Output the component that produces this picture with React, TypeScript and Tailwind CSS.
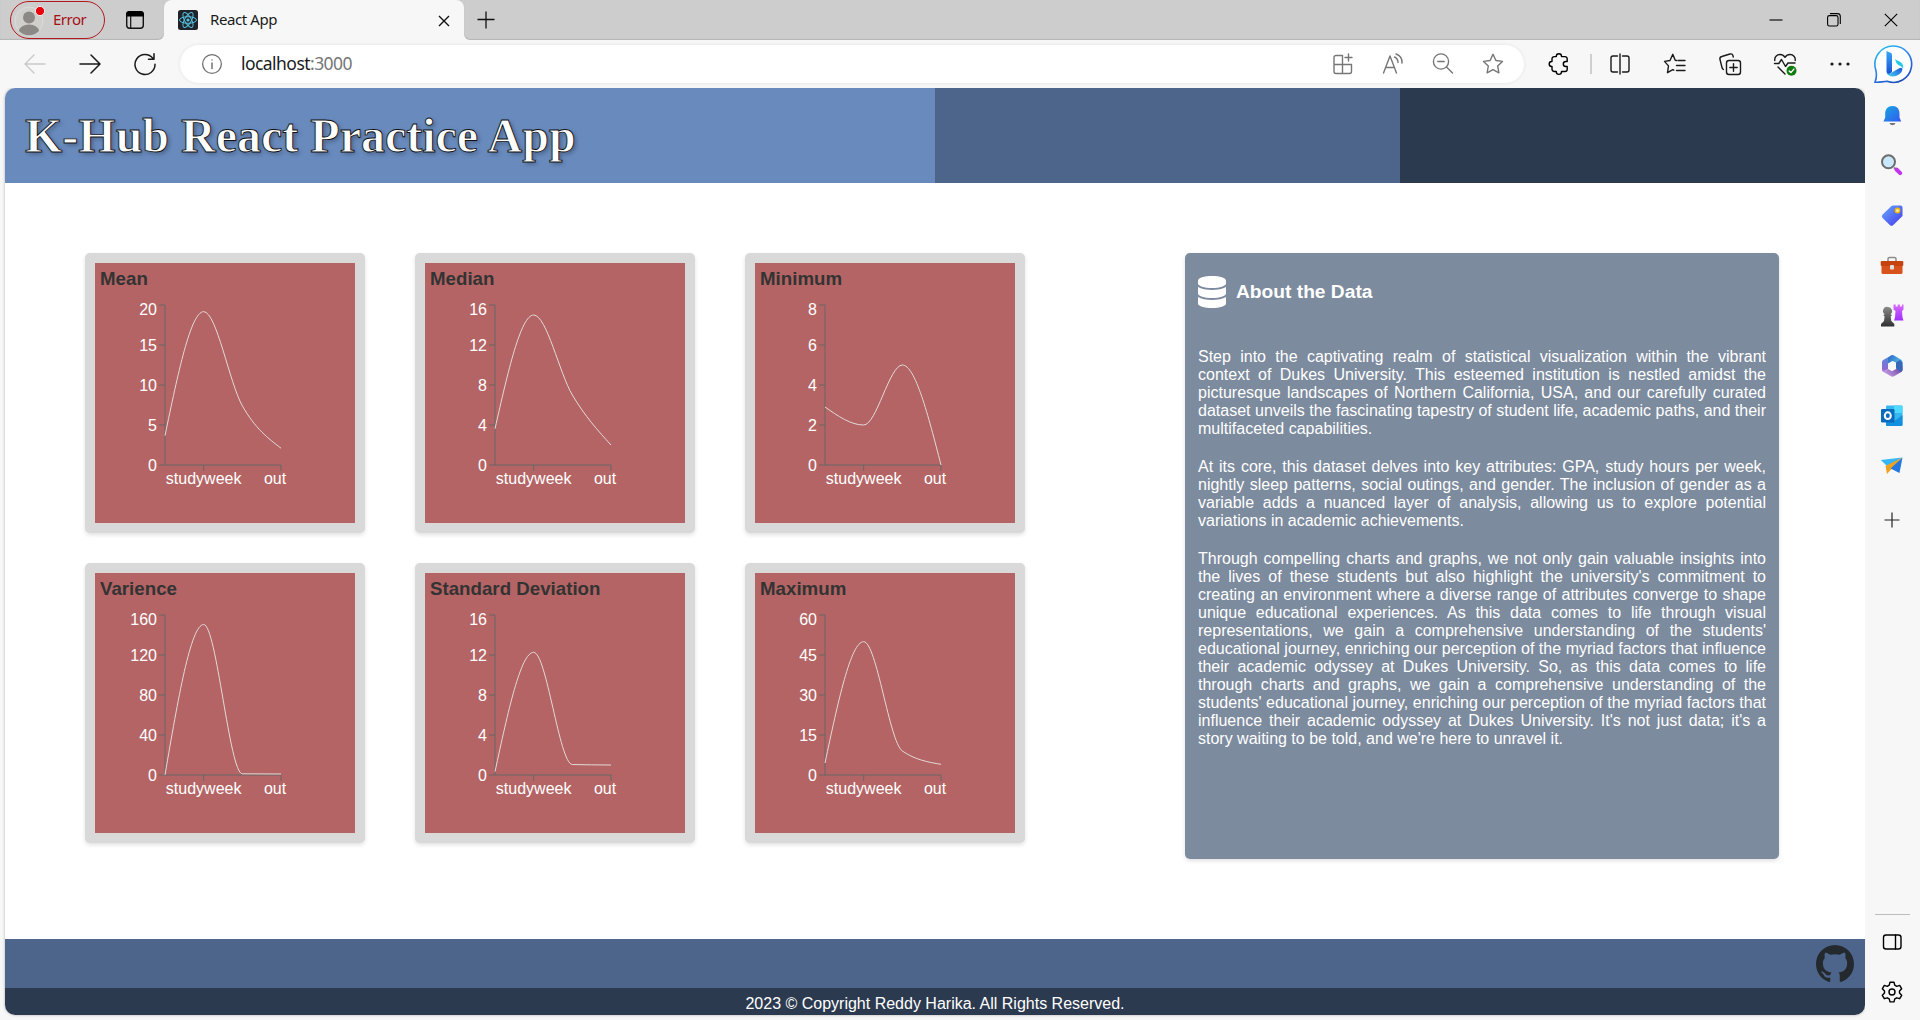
import React from "react";
import { FaDatabase } from "react-icons/fa";
import { BsGithub } from "react-icons/bs";

type Series = { title: string; ticks: number[]; values: number[] };

const SERIES: Series[] = [
  { title: "Mean", ticks: [0, 5, 10, 15, 20], values: [3.66, 19.17, 7.4, 2.1] },
  { title: "Median", ticks: [0, 4, 8, 12, 16], values: [3.62, 15, 7, 2] },
  { title: "Minimum", ticks: [0, 2, 4, 6, 8], values: [2.9, 2, 5, 0] },
  { title: "Varience", ticks: [0, 40, 80, 120, 160], values: [0.1, 150.5, 1.2, 1] },
  { title: "Standard Deviation", ticks: [0, 4, 8, 12, 16], values: [0.33, 12.27, 1.05, 1] },
  { title: "Maximum", ticks: [0, 15, 30, 45, 60], values: [4.5, 50, 9, 4] },
];

const LEFT = 65;
const TOP = 5;
const PLOT_H = 160;
const STEP = 116 / 3;

/** Monotone cubic interpolation through equally spaced points. */
function monotonePath(pts: [number, number][]): string {
  const n = pts.length;
  const slope: number[] = [];
  for (let i = 0; i < n - 1; i++) slope.push((pts[i + 1][1] - pts[i][1]) / (pts[i + 1][0] - pts[i][0]));
  const t: number[] = new Array(n).fill(0);
  for (let i = 1; i < n - 1; i++) {
    const a = slope[i - 1];
    const b = slope[i];
    t[i] = (Math.sign(a) + Math.sign(b)) * Math.min(Math.abs(a), Math.abs(b), Math.abs(a + b) / 4);
  }
  t[0] = (3 * slope[0] - t[1]) / 2;
  t[n - 1] = (3 * slope[n - 2] - t[n - 2]) / 2;
  let d = `M${pts[0][0]},${pts[0][1]}`;
  for (let i = 0; i < n - 1; i++) {
    const dx = (pts[i + 1][0] - pts[i][0]) / 3;
    d += `C${pts[i][0] + dx},${pts[i][1] + dx * t[i]},${pts[i + 1][0] - dx},${pts[i + 1][1] - dx * t[i + 1]},${pts[i + 1][0]},${pts[i + 1][1]}`;
  }
  return d;
}

function ChartCard({ title, ticks, values }: Series) {
  const max = ticks[ticks.length - 1];
  const y = (v: number) => TOP + PLOT_H * (1 - v / max);
  const pts = values.map((v, i) => [LEFT + i * STEP, y(v)] as [number, number]);
  const right = LEFT + 3 * STEP;
  return (
    <div className="h-[280px] w-[280px] rounded-[5px] border-10 border-[#d9d9d9] bg-[#d9d9d9] shadow-[0_2px_4px_rgba(0,0,0,0.12)]">
      <div className="h-[260px] bg-[#b46464] pt-[5px] pl-[5px]">
        <h3 className="h-[22px] text-[18.72px] leading-[22px] font-bold text-[#333]">{title}</h3>
        <svg className="mt-[10px] block" width="200" height="200" fontSize="16">
          <g stroke="#666" fill="none">
            <path d={`M${LEFT},${TOP}V${TOP + PLOT_H}H${right}`} />
            {ticks.map((v) => (
              <path key={v} d={`M${LEFT - 6},${y(v)}H${LEFT}`} />
            ))}
            <path d={`M${LEFT + STEP},165v6M${right},165v6`} />
          </g>
          <g fill="#fff">
            {ticks.map((v) => (
              <text key={v} x={LEFT - 8} y={Math.max(y(v), 9) + 5.7} textAnchor="end">
                {v}
              </text>
            ))}
            <text x={LEFT + STEP} y="184" textAnchor="middle">studyweek</text>
            <text x="175" y="184" textAnchor="middle">out</text>
          </g>
          <path d={monotonePath(pts)} fill="none" stroke="#e2dada" />
        </svg>
      </div>
    </div>
  );
}

type IconProps = { children: React.ReactNode; size?: number; className?: string };

function Icon({ children, size = 24, className = "text-[#1a1a1a]" }: IconProps) {
  return (
    <svg
      width={size}
      height={size}
      viewBox="0 0 24 24"
      fill="none"
      stroke="currentColor"
      strokeWidth="1.4"
      strokeLinecap="round"
      strokeLinejoin="round"
      className={"shrink-0 " + className}
    >
      {children}
    </svg>
  );
}

const STAR = "M12 2.3l2.9 6.2 6.6.9-4.8 4.7 1.2 6.7-5.9-3.2-5.9 3.2 1.2-6.7-4.8-4.7 6.6-.9z";

function TabStrip() {
  return (
    <div className="flex h-10 bg-[#f7f7f7]">
      <div className="flex w-[164px] items-start rounded-br-[6px] bg-[#cdcdcd] shadow-[inset_0_-1px_1px_rgba(0,0,0,0.12)]">
        <div className="mt-[1px] ml-[10px] flex h-[38px] w-[95px] items-center rounded-full border-[1.5px] border-[#b3181e] text-[#a80f14]">
          <svg width="34" height="34" viewBox="0 0 34 34" className="ml-[3px]">
            <circle cx="15" cy="18" r="14" fill="#d0cfcc" stroke="#dddcd9" />
            <circle cx="15" cy="14.5" r="6" fill="#8b8885" />
            <path d="M5 28a10 6.5 0 0 1 20 0a14 14 0 0 1-20 0z" fill="#8b8885" />
            <circle cx="26" cy="8" r="4.6" fill="#e8000b" stroke="#eee" />
          </svg>
          <span className="-mt-[2px] ml-[5px] text-[15px] tracking-[-0.5px]">Error</span>
        </div>
        <svg width="24" height="24" viewBox="0 0 24 24" className="mt-2 ml-[18px]">
          <rect x="3.7" y="3.7" width="16.6" height="16.6" rx="3" fill="none" stroke="#111" strokeWidth="1.4" />
          <path d="M3 8.500V6.500a3.500 3.500 0 0 1 3.500-3.500h11a3.500 3.500 0 0 1 3.500 3.500v2z" fill="#000" />
          <path d="M7.700 8v12" stroke="#111" strokeWidth="1.200" />
        </svg>
      </div>
      <div className="flex w-[300px] items-center bg-[#cdcdcd]">
        <div className="flex h-10 w-[300px] items-center rounded-t-[8px] bg-[#f7f7f7]">
          <svg width="20" height="20" viewBox="0 0 20 20" className="ml-[14px]">
            <rect width="20" height="20" rx="2.5" fill="#20232a" />
            <g fill="none" stroke="#53c1de" strokeWidth="1">
              <ellipse cx="10" cy="10" rx="8.500" ry="3.300" />
              <ellipse cx="10" cy="10" rx="8.500" ry="3.300" transform="rotate(60 10 10)" />
              <ellipse cx="10" cy="10" rx="8.500" ry="3.300" transform="rotate(120 10 10)" />
            </g>
            <circle cx="10" cy="10" r="1.6" fill="#53c1de" />
          </svg>
          <span className="-mt-[2px] ml-3 text-[15px] tracking-[-0.4px] text-[#1b1b1b]">React App</span>
          <svg width="12" height="12" viewBox="0 0 12 12" className="mt-px mr-[14px] ml-auto">
            <path d="M1 1l10 10M11 1L1 11" stroke="#111" strokeWidth="1.400" />
          </svg>
        </div>
      </div>
      <div className="flex flex-1 items-start rounded-bl-[6px] bg-[#cdcdcd] shadow-[inset_0_-1px_1px_rgba(0,0,0,0.12)]">
        <svg width="18" height="18" viewBox="0 0 18 18" className="mt-[11px] ml-[13px]">
          <path d="M9 0.500v17M0.500 8.500h17" stroke="#111" strokeWidth="1.300" />
        </svg>
        <div className="mt-[12.500px] mr-[22px] ml-auto flex gap-[43.500px]">
          <svg width="14" height="14" viewBox="0 0 14 14"><path d="M0.500 7h13" stroke="#000" strokeWidth="1.100" /></svg>
          <svg width="14" height="14" viewBox="0 0 14 14" fill="none" stroke="#000" strokeWidth="1.100">
            <rect x="0.600" y="2.600" width="10.400" height="10.400" rx="1.800" />
            <path d="M3 0.600h7.500a2.800 2.800 0 0 1 2.800 2.800V11" />
          </svg>
          <svg width="14" height="14" viewBox="0 0 14 14"><path d="M0.800 0.800l12.400 12.400M13.200 0.800L0.800 13.200" stroke="#000" strokeWidth="1.100" /></svg>
        </div>
      </div>
    </div>
  );
}

function BingLogo() {
  return (
    <svg width="42" height="44" viewBox="0 0 42 44" className="shrink-0">
      <defs>
        <linearGradient id="bingRing" x1="0" y1="0" x2="0.6" y2="1">
          <stop offset="0" stopColor="#1fc8f2" />
          <stop offset="0.5" stopColor="#2f86ee" />
          <stop offset="1" stopColor="#1f4fc4" />
        </linearGradient>
        <linearGradient id="bingStem" x1="0" y1="0" x2="0" y2="1">
          <stop offset="0" stopColor="#36a8f8" />
          <stop offset="1" stopColor="#1b4fd0" />
        </linearGradient>
        <linearGradient id="bingSweep" x1="1" y1="0" x2="0" y2="0.6">
          <stop offset="0" stopColor="#1d55d8" />
          <stop offset="1" stopColor="#3fc4f2" />
        </linearGradient>
      </defs>
      <path
        d="M20.500 2a18.200 18.200 0 1 1-6.300 35.300C9.800 37.300 6 38.800 2 38.200C3.600 34.500 3.700 29.500 2.700 25.500A18.200 18.200 0 0 1 20.500 2z"
        fill="#fff"
        stroke="url(#bingRing)"
        strokeWidth="1.600"
      />
      <path d="M13.500 7l4.200 1.700q1.300.6 1.300 2V28l-3.200 2.500q-2.300-.5-2.300-3z" fill="url(#bingStem)" />
      <path d="M13.600 27.500q1 3.200 4 1.700l8.500-5q3.500-1.500 3.300 1.300-.8 4.300-6.400 6.500-8 2-9.400-4.500z" fill="url(#bingSweep)" />
      <path d="M22 15.300l5 2.400q3.800 2.300 3.200 6.800-1.700-2.200-4.700-3.500-1.500-.7-2.200-2.200z" fill="#22cbe8" />
    </svg>
  );
}

function Toolbar() {
  return (
    <div className="flex h-12 items-center bg-[#f7f7f7]">
      <div className="ml-[23px] flex gap-[31px]">
        <Icon className="text-[#c9c9c9]"><path d="M22 12H2.500M11 3L2 12l9 9" /></Icon>
        <Icon><path d="M2 12h19.500M13 3l9 9-9 9" strokeWidth="1.500" /></Icon>
        <Icon><path d="M20 6.500A10 10 0 1 0 22 12.300M21 1.800v5.500h-5.500" strokeWidth="1.500" /></Icon>
      </div>
      <div className="ml-[23px] flex h-[38px] w-[1344px] items-center rounded-full bg-white shadow-[0_0_4px_rgba(0,0,0,0.08)]">
        <Icon size={22} className="ml-[21px] text-[#6f6f6f]">
          <circle cx="12" cy="12" r="10.200" />
          <path d="M12 11v6M12 7.500v.2" strokeWidth="1.600" />
        </Icon>
        <span className="-mt-[2px] ml-[18px] text-[17.500px] tracking-[-0.55px] text-[#1b1b1b]">
          localhost<span className="text-[#767676]">:3000</span>
        </span>
        <div className="mr-[19px] ml-auto flex gap-[26px] text-[#767676]">
          <Icon className="">
            <path d="M11.500 3.500H5a2 2 0 0 0-2 2v14a2 2 0 0 0 2 2h13.500a2 2 0 0 0 2-2V12.500H3M11.500 3.500v18M17.500 2v7M14 5.500h7" />
          </Icon>
          <Icon className="">
            <path d="M2.500 21L9 4l6.500 17M4.700 15.500h8.600M13.500 5a6 6 0 0 1 3.500 5.500M15 2a9 9 0 0 1 6 9" />
          </Icon>
          <Icon className="">
            <circle cx="10" cy="9.500" r="7.600" />
            <path d="M15.500 15l6 6M6.800 9.500h6.400" />
          </Icon>
          <Icon className=""><path d={STAR} /></Icon>
        </div>
      </div>
      <Icon className="ml-[23px]">
        <path d="M9.300 4.600V4.300a2.600 2.600 0 0 1 5.200 0v.3H18a2.200 2.200 0 0 1 2.200 2.200V9.500h-1.400a2.500 2.500 0 0 0 0 5h1.400v2.800a2.200 2.200 0 0 1-2.200 2.200h-3.500v.3a2.600 2.600 0 0 1-5.200 0v-.3H7.200A2.200 2.200 0 0 1 5 17.300V14.500h-.3a2.500 2.500 0 0 1 0-5H5V6.800a2.200 2.200 0 0 1 2.200-2.200z" />
      </Icon>
      <div className="ml-[19px] h-5 w-[1.500px] bg-[#cfcfcf]" />
      <div className="ml-[16px] flex gap-[31px]">
        <Icon>
          <path d="M9.500 4H5a2 2 0 0 0-2 2v12a2 2 0 0 0 2 2h4.500M14.500 4H19a2 2 0 0 1 2 2v12a2 2 0 0 1-2 2h-4.500M12 2v20" />
        </Icon>
        <Icon>
          <path d="M13.500 8.500l-1.300-.3L9.800 2.300 7 8.500l-5.500.9 4 4.500-1 6.800 5.300-3 1 .5M15 8.500h7M13.500 13.500H22M13.500 18.500H22" />
        </Icon>
        <Icon>
          <rect x="8.500" y="8.500" width="14" height="14" rx="2.500" />
          <path d="M15.500 11.800v7.400M11.800 15.500h7.400M5.500 17.500a3 3 0 0 1-1.500-2L2 7.500A2.500 2.500 0 0 1 3.800 4.500L12 2a2.500 2.500 0 0 1 3 1.800l.3 1.200" />
        </Icon>
        <Icon>
          <path d="M1.800 8.500C1.300 5 3.800 2.500 7 2.500c2.500 0 4 1.300 5 2.800 1-1.500 2.500-2.800 5-2.800 3.200 0 5.700 2.500 5.200 6M1.500 11.500h4.300l2.700-4 4 7 2.500-3.500h7M5 15l7 7" />
          <circle cx="18.500" cy="18.800" r="5" fill="#107c10" stroke="none" />
          <path d="M16.200 19l1.700 1.600 3-3.500" stroke="#fff" />
        </Icon>
        <Icon>
          <g fill="currentColor" stroke="none">
            <circle cx="4" cy="12" r="1.600" />
            <circle cx="12" cy="12" r="1.600" />
            <circle cx="20" cy="12" r="1.600" />
          </g>
        </Icon>
      </div>
    </div>
  );
}

function Sidebar() {
  return (
    <aside className="flex w-[55px] flex-col items-center bg-[#f7f7f7] pr-px">
      <svg width="0" height="0" className="absolute">
        <defs>
          <linearGradient id="blue" x1="0" y1="0" x2="1" y2="1">
            <stop offset="0" stopColor="#14a8e0" />
            <stop offset="1" stopColor="#3558f0" />
          </linearGradient>
          <linearGradient id="tag" x1="0" y1="0" x2="1" y2="1">
            <stop offset="0" stopColor="#6aa9ff" />
            <stop offset="1" stopColor="#4238ea" />
          </linearGradient>
          <linearGradient id="violet" x1="0" y1="0" x2="0" y2="1">
            <stop offset="0" stopColor="#d96bff" />
            <stop offset="1" stopColor="#a02fff" />
          </linearGradient>
          <linearGradient id="pawn" x1="0" y1="0" x2="0" y2="1">
            <stop offset="0" stopColor="#8a8a8a" />
            <stop offset="1" stopColor="#303030" />
          </linearGradient>
          <linearGradient id="hexLeft" x1="0" y1="0" x2="0" y2="1">
            <stop offset="0" stopColor="#4d8fe0" />
            <stop offset="1" stopColor="#9a62d0" />
          </linearGradient>
          <linearGradient id="hexTop" x1="0" y1="0" x2="1" y2="0.6">
            <stop offset="0" stopColor="#2c62c0" />
            <stop offset="1" stopColor="#58c4ee" />
          </linearGradient>
          <linearGradient id="hexBottom" x1="0" y1="0.5" x2="1" y2="0">
            <stop offset="0" stopColor="#c79ae6" />
            <stop offset="1" stopColor="#5b3c94" />
          </linearGradient>
        </defs>
      </svg>
      <div className="mt-[16px] flex flex-col gap-[26px]">
        <svg width="24" height="24" viewBox="0 0 24 24">
          <path d="M12.500 2c4.500 0 7 3 7 7.500v4l1.700 4H3.500l1.700-4v-4C5.200 5 8 2 12.500 2z" fill="url(#blue)" />
          <path d="M9.500 19h6q-.8 2.300-3 2.300t-3-2.300z" fill="#777" />
        </svg>
        <svg width="24" height="24" viewBox="0 0 24 24">
          <path d="M14 13.500l2 2" stroke="#888" strokeWidth="2" />
          <path d="M16.500 15.500l3.700 3.700" stroke="#c235ee" strokeWidth="4" strokeLinecap="round" />
          <circle cx="8.500" cy="7.800" r="6.500" fill="#c9e8fb" stroke="#6d6d6d" strokeWidth="2" />
        </svg>
        <svg width="24" height="24" viewBox="0 0 24 24">
          <path d="M13 1.500h7.500a2 2 0 0 1 2 2V12L13.300 21a2.500 2.500 0 0 1-3.500 0L2.600 14a2.500 2.500 0 0 1 0-3.500l8.600-8.200a3 3 0 0 1 1.800-.8z" fill="url(#tag)" />
          <circle cx="17.500" cy="6.500" r="2.200" fill="#ffe9a0" stroke="#f0b800" strokeWidth="1.400" />
        </svg>
        <svg width="24" height="24" viewBox="0 0 24 24">
          <path d="M8 8V5a1.500 1.500 0 0 1 1.500-1.500h5A1.500 1.500 0 0 1 16 5V8" fill="none" stroke="#8d8d8d" strokeWidth="1.500" />
          <rect x="1.500" y="9.500" width="21" height="10.500" rx="1.500" fill="#d8521b" />
          <rect x="0.700" y="7" width="22.600" height="5" rx="1" fill="#c4430f" />
          <rect x="10" y="11" width="4" height="4.500" rx="0.800" fill="#e0dede" />
        </svg>
        <svg width="24" height="24" viewBox="0 0 24 24">
          <path d="M13.500 .5h2.200v2h2v-2h2.200v2h2v-2h1.600v5l-1.500 1.500.5 6.500 1 3H14l1-3 .5-6.500L13.500 5.500z" fill="url(#violet)" />
          <path d="M8 3a4 4 0 0 1 2.500 7.200l1.500.8-1.300 1.500.6 4.500 3 3v2.500H1V20l3-3 .6-4.500L3.200 11l1.600-.8A4 4 0 0 1 8 3z" fill="url(#pawn)" />
        </svg>
        <svg width="24" height="24" viewBox="0 0 24 24">
          <path d="M12 1L3.200 6Q2 6.800 2 8.300v7.400q0 1.300 1.200 2L8 15V9l5-3z" fill="url(#hexLeft)" />
          <path d="M11 1.400q1.500-.8 3 0L21.300 5.700q1.200.8 1.200 2.300v4.500L16 8.500 12.500 7 8 9.500V4z" fill="url(#hexTop)" />
          <path d="M2 15.500q0 1.400 1.200 2.200l7.800 4.500q1.500.9 3 0l7.300-4.200q1.200-.8 1.200-2.300V12L16 15l-4 2.300L8 15l-3 2z" fill="url(#hexBottom)" />
          <path d="M22.500 8.500v7.200q0 1.200-1 2L16 14.500V8.500L20 6z" fill="#3767b8" />
          <circle cx="12.200" cy="12" r="3.700" fill="#f7f7f7" />
        </svg>
        <svg width="24" height="24" viewBox="0 0 24 24">
          <rect x="6" y="1.500" width="16.500" height="20.500" rx="1.200" fill="#35b8f1" />
          <path d="M14 1.500h7.300a1.200 1.200 0 0 1 1.200 1.200V9H14z" fill="#50d9ff" />
          <path d="M6 13l8.500 4 8-6v10a1.200 1.200 0 0 1-1.200 1H7.200A1.200 1.200 0 0 1 6 20.800z" fill="#1490df" />
          <rect x="1" y="5" width="13.500" height="13.500" rx="1.200" fill="#0a6cbd" />
          <ellipse cx="7.800" cy="11.700" rx="3" ry="3.400" fill="none" stroke="#fff" strokeWidth="2" />
        </svg>
        <svg width="24" height="24" viewBox="0 0 24 24">
          <path d="M.8 6L22.500 3.500l-15 9z" fill="#35b6f5" />
          <path d="M22.500 3.500l-17 8.500L7 20l4-4.500z" fill="#f0a21c" />
          <path d="M22.500 3.500L10.500 14.500l9 4.500z" fill="#2378e0" />
        </svg>
      </div>
      <svg width="16" height="16" viewBox="0 0 16 16" className="mt-[34px]">
        <path d="M8 0.500v15M0.500 8h15" stroke="#222" strokeWidth="1.200" />
      </svg>
      <div className="mt-auto h-px w-[35px] bg-[#bdbdbd]" />
      <Icon className="mt-[15px]">
        <rect x="3.500" y="5" width="17.500" height="14" rx="2.500" />
        <path d="M15.500 5v14" />
      </Icon>
      <Icon className="mt-[26px] mb-4">
        <path d="M10 2.200h4l.8 3 1.900 1.100 3-.9 2 3.400-2.200 2.200v2.100l2.200 2.200-2 3.400-3-.9-1.900 1.100-.8 3h-4l-.8-3-1.900-1.100-3 .9-2-3.400 2.200-2.200V11L2.300 8.800l2-3.400 3 .9 1.900-1.100z" />
        <circle cx="12" cy="12" r="3" />
      </Icon>
    </aside>
  );
}

function AboutPanel() {
  return (
    <section className="h-[606px] w-[594px] rounded-[5px] bg-[#7d8b9e] px-[13px] pt-[23px] text-white shadow-[0_2px_4px_rgba(0,0,0,0.12)]">
      <div className="flex h-8 items-center gap-[10px]">
        <FaDatabase className="h-8 w-7" />
        <h3 className="-mt-px text-[19.200px] leading-[22px] font-bold">About the Data</h3>
      </div>
      <div className="mt-[40px] flex flex-col gap-5 text-justify text-[16px] leading-[18px]">
        <p>
          Step into the captivating realm of statistical visualization within the vibrant context of Dukes University.
          This esteemed institution is nestled amidst the picturesque landscapes of Northern California, USA, and our
          carefully curated dataset unveils the fascinating tapestry of student life, academic paths, and their
          multifaceted capabilities.
        </p>
        <p>
          At its core, this dataset delves into key attributes: GPA, study hours per week, nightly sleep patterns,
          social outings, and gender. The inclusion of gender as a variable adds a nuanced layer of analysis, allowing
          us to explore potential variations in academic achievements.
        </p>
        <p>
          Through compelling charts and graphs, we not only gain valuable insights into the lives of these students but
          also highlight the university's commitment to creating an environment where a diverse range of attributes
          converge to shape unique educational experiences. As this data comes to life through visual representations,
          we gain a comprehensive understanding of the students' educational journey, enriching our perception of the
          myriad factors that influence their academic odyssey at Dukes University. So, as this data comes to life
          through charts and graphs, we gain a comprehensive understanding of the students' educational journey,
          enriching our perception of the myriad factors that influence their academic odyssey at Dukes University.
          It's not just data; it's a story waiting to be told, and we're here to unravel it.
        </p>
      </div>
    </section>
  );
}

export default function App() {
  return (
    <div className="flex h-[1020px] w-[1920px] flex-col overflow-hidden bg-[#f7f7f7] font-['Noto_Sans',sans-serif]">
      <div className="relative">
        <TabStrip />
        <Toolbar />
        <div className="absolute top-[44px] left-[1873px]">
          <BingLogo />
        </div>
      </div>
      <div className="flex min-h-0 flex-1">
        <main className="mb-[5px] ml-[5px] flex w-[1860px] flex-col overflow-hidden rounded-[10px] bg-white font-['Liberation_Sans',Arial,sans-serif] shadow-[0_0_3px_rgba(0,0,0,0.3)]">
          <header className="flex h-[95px] shrink-0">
            <div className="flex w-[930px] items-center bg-[#688abd] pl-[20px]">
              <h1 className="font-['Liberation_Serif',serif] text-[48px] leading-[55px] font-bold whitespace-nowrap text-white [-webkit-text-stroke:0.9px_#111] [text-shadow:2px_2px_4px_rgba(0,0,0,0.3)]">
                K-Hub React Practice App
              </h1>
            </div>
            <div className="w-[465px] bg-[#4d658a]" />
            <div className="flex-1 bg-[#2c3a50]" />
          </header>
          <div className="flex flex-1 items-start pt-[70px] pl-20">
            <div className="grid grid-cols-[repeat(3,280px)] gap-x-[50px] gap-y-[30px]">
              {SERIES.map((s) => (
                <ChartCard key={s.title} {...s} />
              ))}
            </div>
            <div className="ml-[160px]">
              <AboutPanel />
            </div>
          </div>
          <footer className="shrink-0">
            <div className="flex h-[49px] items-center justify-end bg-[#4d658a] pr-[11px]">
              <BsGithub className="h-[38px] w-[38px] text-[#24292e]" />
            </div>
            <div className="h-[27px] bg-[#2c3a50] pt-[7px] text-center text-[16px] leading-[18px] text-white">
              2023 © Copyright Reddy Harika. All Rights Reserved.
            </div>
          </footer>
        </main>
        <Sidebar />
      </div>
    </div>
  );
}
